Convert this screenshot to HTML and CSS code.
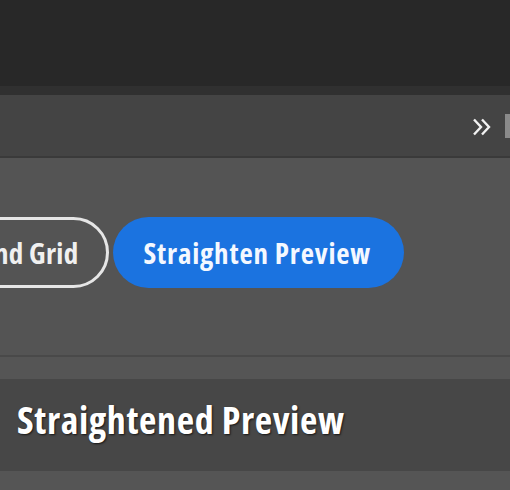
FILE: index.html
```html
<!DOCTYPE html>
<html lang="en">
<head>
<meta charset="UTF-8">
<title>Straighten</title>
<link rel="stylesheet" href="styles.css">
</head>
<body>

<div class="topbar"></div>
<div class="seam"></div>

<div class="toolbar">
  <svg class="more" width="22" height="18" viewBox="0 0 22 18">
    <path d="M3 1.5 L10 9 L3 16.5 M11 1.5 L18 9 L11 16.5" fill="none" stroke="#f2f2f2" stroke-width="2.4"/>
  </svg>
  <span class="edge"></span>
</div>

<div class="controls">
  <div class="btn-row">
    <button class="btn outline">Background Grid</button>
    <button class="btn primary">Straighten Preview</button>
  </div>
</div>

<div class="gap"></div>

<div class="panel-head">
  <h2>Straightened Preview</h2>
</div>

<div class="panel-body"></div>

</body>
</html>
```

FILE: styles.css
```css
body {
  margin: 0;
  background-color: #555555;
  font-family: 'Open Sans', sans-serif;
  overflow: hidden;
}
.topbar {
  height: 86px;
  background-color: #282828;
}
.seam {
  height: 9px;
  background-color: #303030;
}
.toolbar {
  height: 61px;
  background-color: #444444;
  border-bottom: 2px solid #3a3a3a;
  display: flex;
  align-items: center;
  justify-content: flex-end;
  gap: 12px;
}
.more {
  margin-top: 2px;
}
.edge {
  width: 5px;
  height: 24px;
  background-color: #8a8a8a;
}
.controls {
  height: 197px;
  background-color: #545454;
  border-bottom: 2px solid #494949;
  overflow: hidden;
}
/* row is right-aligned so the outline button runs off the left edge */
.btn-row {
  width: 404px;
  display: flex;
  justify-content: flex-end;
  gap: 4px;
  margin-top: 59px;
}
.btn {
  flex-shrink: 0;
  height: 71px;
  border-radius: 36px;
  font-family: 'Open Sans', sans-serif;
  font-weight: 700;
  font-stretch: 87.5%;
  font-size: 29px;
  letter-spacing: 0.8px;
  white-space: nowrap;
  cursor: pointer;
}
.outline {
  background: transparent;
  color: #f0f0f0;
  border: 3px solid #e6e6e6;
  padding: 0 27px 0 30px;
  letter-spacing: 0.3px;
}
.primary {
  background-color: #1b73e0;
  color: #f4f8ff;
  border: none;
  padding: 0 33px 0 31px;
}
.gap {
  height: 22px;
  background-color: #555555;
}
.panel-head {
  height: 80px;
  background-color: #474747;
  display: flex;
  align-items: center;
  padding-left: 17px;
  padding-bottom: 12px;
}
.panel-head h2 {
  margin: 0;
  color: #ffffff;
  font-size: 38px;
  font-weight: 700;
  font-stretch: 87.5%;
  letter-spacing: 0.6px;
  text-shadow: 1px 1px 2px rgba(0, 0, 0, 0.7);
}
.panel-body {
  height: 30px;
  background-color: #555555;
}
```
